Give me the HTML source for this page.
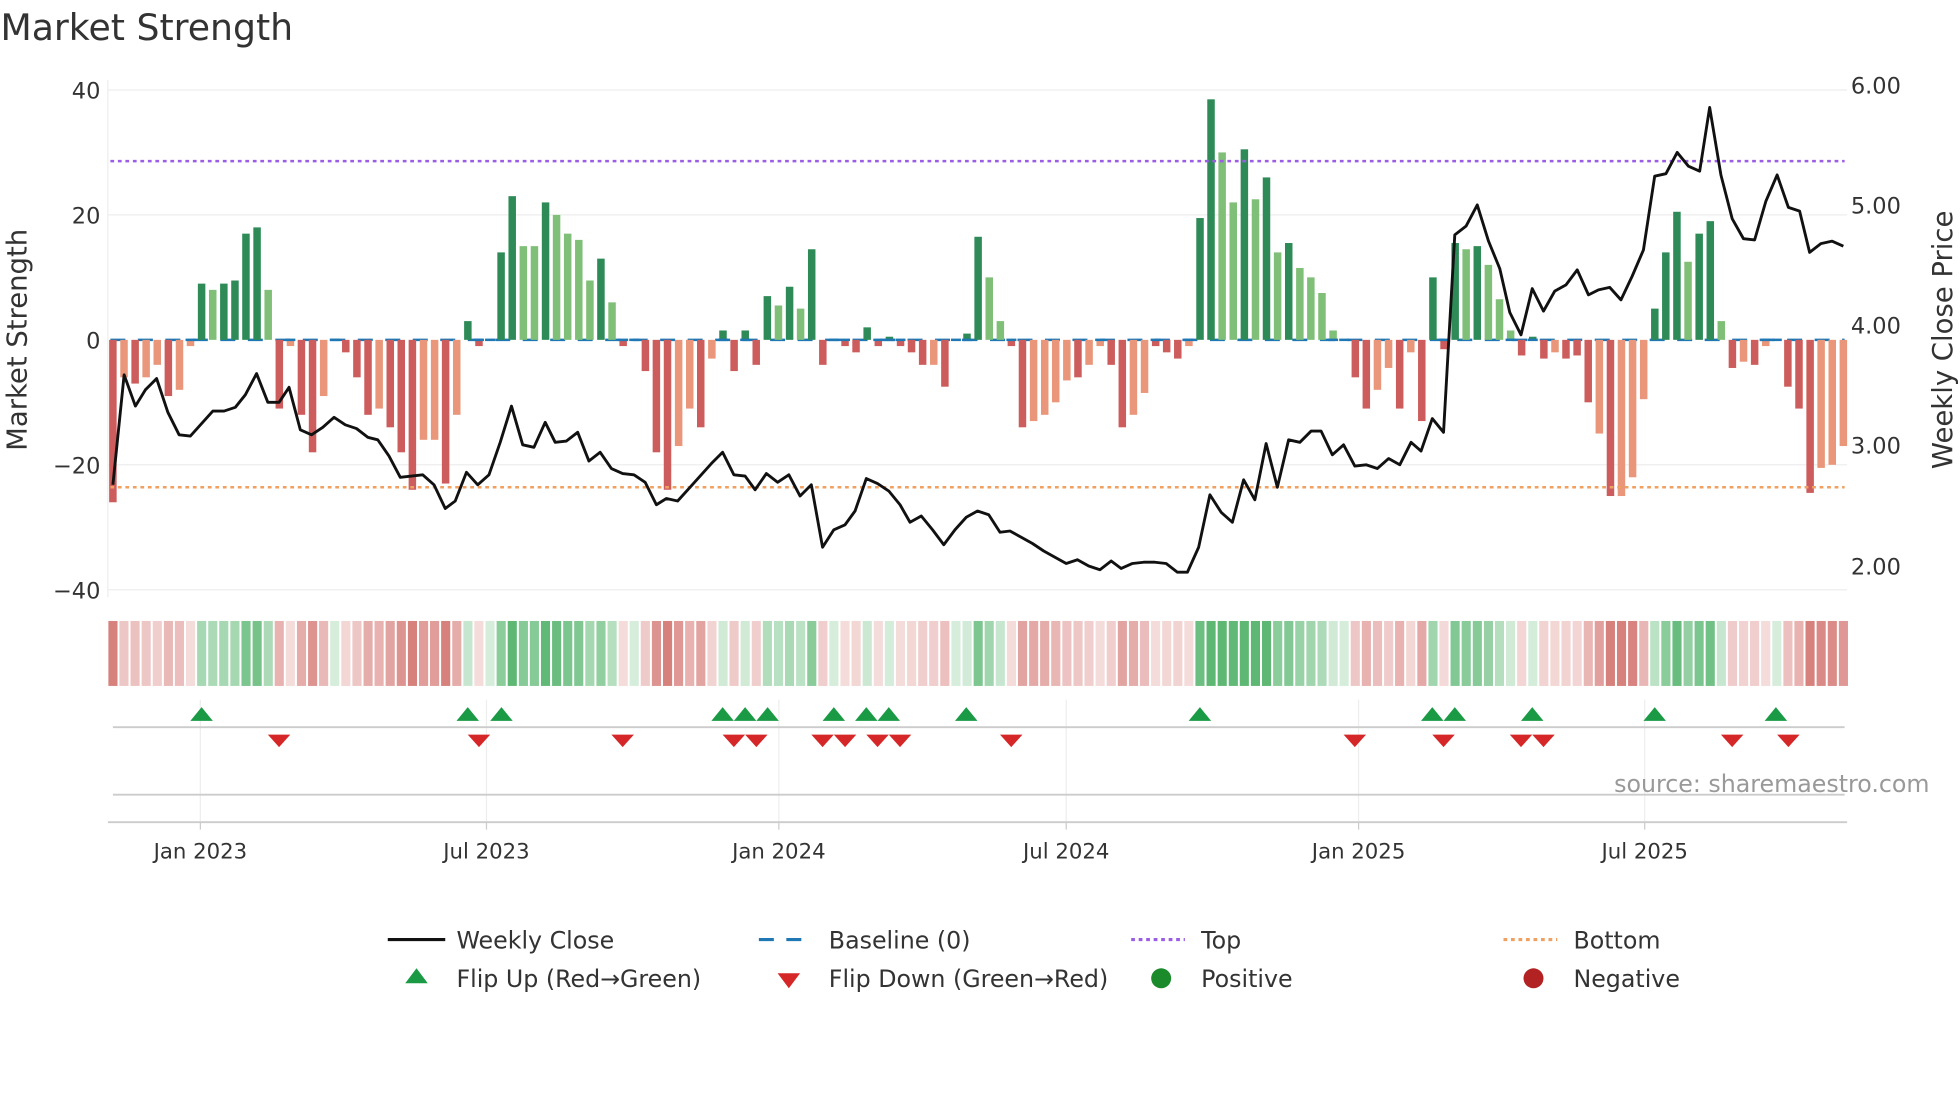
<!DOCTYPE html>
<html><head><meta charset="utf-8"><style>
html,body{margin:0;padding:0;background:#fff;}
svg{display:block;font-family:"DejaVu Sans","Liberation Sans",sans-serif;}
</style></head><body>
<svg id="s" width="1960" height="1102" viewBox="0 0 1568 882" xmlns="http://www.w3.org/2000/svg">
<rect width="1568" height="882" fill="#fff"/>
<text x="0" y="32" font-size="29" fill="#333">Market Strength</text>
<g stroke="#eeeeee" stroke-width="1">
<line x1="86" y1="72" x2="1478" y2="72"/><line x1="86" y1="172" x2="1478" y2="172"/>
<line x1="86" y1="372" x2="1478" y2="372"/><line x1="86" y1="472" x2="1478" y2="472"/>
<line x1="86" y1="64" x2="86" y2="478"/>
</g>
<g font-size="18" fill="#333" text-anchor="end">
<text x="80" y="79">40</text><text x="80" y="179">20</text><text x="80" y="279">0</text>
<text x="80" y="379">−20</text><text x="80" y="479">−40</text>
</g>
<g font-size="18" fill="#333">
<text x="1481" y="75">6.00</text><text x="1481" y="171">5.00</text><text x="1481" y="267">4.00</text>
<text x="1481" y="363">3.00</text><text x="1481" y="460">2.00</text>
</g>
<text transform="translate(21,272) rotate(-90)" font-size="22" fill="#333" text-anchor="middle">Market Strength</text>
<text transform="translate(1562,272) rotate(-90)" font-size="22" fill="#333" text-anchor="middle">Weekly Close Price</text>
<line x1="88" y1="272" x2="1476" y2="272" stroke="#1f77b4" stroke-width="2" stroke-dasharray="12,10"/>
<g id="bars"></g>
<line x1="88" y1="129" x2="1476" y2="129" stroke="#9b5de5" stroke-width="2" stroke-dasharray="3,3"/>
<line x1="88" y1="390" x2="1476" y2="390" stroke="#f0a060" stroke-width="2" stroke-dasharray="3,3"/>
<g id="base"></g>
<polyline id="price" fill="none" stroke="#111" stroke-width="2.3" stroke-linejoin="round"/>
<g id="heat"></g>
<g stroke="#eeeeee" stroke-width="1">
<line x1="160" y1="560" x2="160" y2="658"/><line x1="389" y1="560" x2="389" y2="658"/>
<line x1="623" y1="560" x2="623" y2="658"/><line x1="853" y1="560" x2="853" y2="658"/>
<line x1="1087" y1="560" x2="1087" y2="658"/><line x1="1316" y1="560" x2="1316" y2="658"/>
</g>
<line x1="90" y1="582" x2="1476" y2="582" stroke="#ccc" stroke-width="1.5"/>
<line x1="90" y1="636" x2="1476" y2="636" stroke="#ccc" stroke-width="1.5"/>
<line x1="86" y1="658" x2="1478" y2="658" stroke="#ccc" stroke-width="1.5"/>
<g stroke="#ccc"><line x1="160" y1="658" x2="160" y2="664"/><line x1="389" y1="658" x2="389" y2="664"/><line x1="623" y1="658" x2="623" y2="664"/><line x1="853" y1="658" x2="853" y2="664"/><line x1="1087" y1="658" x2="1087" y2="664"/><line x1="1316" y1="658" x2="1316" y2="664"/></g>
<g id="marks"></g>
<text x="1544" y="634" font-size="19" fill="#999" text-anchor="end">source: sharemaestro.com</text>
<g font-size="17" fill="#333" text-anchor="middle">
<text x="160" y="687">Jan 2023</text><text x="389" y="687">Jul 2023</text><text x="623" y="687">Jan 2024</text>
<text x="853" y="687">Jul 2024</text><text x="1087" y="687">Jan 2025</text><text x="1316" y="687">Jul 2025</text>
</g>
<g font-size="19" fill="#333">
<line x1="310" y1="752" x2="356" y2="752" stroke="#111" stroke-width="2.5"/><text x="365" y="759">Weekly Close</text>
<line x1="607" y1="752" x2="650" y2="752" stroke="#1f77b4" stroke-width="2.5" stroke-dasharray="12,10"/><text x="663" y="759">Baseline (0)</text>
<line x1="905" y1="752" x2="948" y2="752" stroke="#9b5de5" stroke-width="2.5" stroke-dasharray="3,3"/><text x="961" y="759">Top</text>
<line x1="1203" y1="752" x2="1246" y2="752" stroke="#f0a060" stroke-width="2.5" stroke-dasharray="3,3"/><text x="1259" y="759">Bottom</text>
<polygon points="324,787 333,775 342,787" fill="#1a9a44"/><text x="365" y="790">Flip Up (Red→Green)</text>
<polygon points="622,779 640,779 631,791" fill="#d62728"/><text x="663" y="790">Flip Down (Green→Red)</text>
<circle cx="929" cy="783" r="8" fill="#1a8a2a"/><text x="961" y="790">Positive</text>
<circle cx="1227" cy="783" r="8" fill="#b22222"/><text x="1259" y="790">Negative</text>
</g>
</svg>
<script>
var vals="-26 -6l -7 -6l -4l -9 -8l -1l 9 8l 9 9.5 17 18 8l -11 -1l -12 -18 -9l 0 -2 -6 -12 -11l -14 -18 -24 -16l -16l -23 -12l 3 -1 0 14 23 15l 15l 22 20l 17l 16l 9.5l 13 6l -1 0 -5 -18 -24 -17l -11l -14 -3l 1.5 -5 1.5 -4 7 5.5l 8.5 5l 14.5 -4 0 -1 -2 2 -1 0.5 -1 -2 -4 -4l -7.5 0 1 16.5 10l 3l -1 -14 -13l -12l -10l -6.5l -6 -4l -1l -4 -14 -12l -8.5l -1 -2 -3 -1l 19.5 38.5 30l 22l 30.5 22.5l 26 14l 15.5 11.5l 10l 7.5l 1.5l 0 -6 -11 -8l -4.5l -11 -2l -13 10 -1.5 15.5 14.5l 15 12l 6.5l 1.5l -2.5 0.5 -3 -2l -3 -2.5 -10 -15l -25 -25l -22l -9.5l 5 14 20.5 12.5l 17 19 3l -4.5 -3.5l -4 -1l 0 -7.5 -11 -24.5 -20.5l -20l -17l".split(" ");
var N=vals.length, x0=90, dx=(1475-90)/(N-1);
var b="",h="",base="";
for(var i=0;i<N;i++){var s=vals[i],l=s.slice(-1)=="l",v=parseFloat(s),x=x0+dx*i;
 var y0=272,y=272-v*5;
 var c=v>=0?(l?"#7fbf77":"#2e8b57"):(l?"#e9967a":"#cd5c5c");
 if(Math.abs(v)>0.2) b+='<rect x="'+(x-3).toFixed(1)+'" y="'+Math.min(y,y0).toFixed(1)+'" width="6" height="'+Math.abs(v*5).toFixed(1)+'" fill="'+c+'"/>';
 var a=Math.min(1,0.25+Math.abs(v)/30);
 var hc=v>=0?"rgba(40,160,70,"+(a*0.75).toFixed(2)+")":"rgba(200,80,75,"+(a*0.72).toFixed(2)+")";
 h+='<rect x="'+(x-dx/2+0.8).toFixed(1)+'" y="497" width="'+(dx-1.6).toFixed(1)+'" height="52" fill="'+hc+'"/>';
 if(Math.abs(v)<=1.5) base+='<line x1="'+(x-4)+'" y1="272" x2="'+(x+4)+'" y2="272" stroke="#1f77b4" stroke-width="2"/>';
}
document.getElementById("bars").innerHTML=b;
document.getElementById("heat").innerHTML=h;
document.getElementById("base").innerHTML=base;
var p="90,388 99,300 108,325 116,312 125,303 134,330 143,348 152,349 161,339 170,329 179,329 188,326 196,316 205,299 214,322 223,322 231,310 240,344 249,348 258,342 267,334 276,340 285,343 294,350 302,352 311,365 320,382 329,381 338,380 347,388 356,407 364,401 373,378 382,388 391,380 400,354 409,325 418,356 427,358 436,338 444,354 453,353 462,346 471,369 480,362 489,375 498,379 507,380 516,386 525,404 533,399 542,401 551,391 560,381 569,371 578,362 587,380 596,381 604,392 613,379 622,386 631,380 640,397 649,388 658,438 667,424 676,420 684,409 693,383 702,387 711,393 720,404 728,418 737,413 746,424 755,436 764,424 773,414 782,409 791,412 800,426 808,425 817,430 826,435 835,441 844,446 853,451 862,448 871,453 880,456 889,449 897,455 906,451 915,450 924,450 933,451 942,458 950,458 959,438 968,396 977,410 986,418 995,384 1004,400 1013,355 1022,390 1031,352 1040,354 1049,345 1057,345 1066,364 1075,356 1084,373 1093,372 1102,375 1111,367 1120,372 1129,354 1137,361 1146,335 1155,346 1164,188 1173,181 1182,164 1191,193 1200,215 1208,250 1217,268 1226,231 1235,249 1244,233 1253,228 1262,216 1271,236 1279,232 1288,230 1297,240 1306,221 1315,200 1324,141 1333,139 1342,122 1351,133 1360,137 1368,86 1377,140 1386,175 1395,191 1404,192 1413,161 1422,140 1431,166 1440,169 1448,202 1457,195 1466,193 1475,197";
document.getElementById("price").setAttribute("points",p);
var up=[161,374,401,578,596,614,667,693,711,773,960,1146,1164,1226,1324,1421];
var dn=[223,383,498,587,605,658,676,702,720,809,1084,1155,1217,1235,1386,1431];
var m="";
up.forEach(function(x){m+='<polygon points="'+(x-9)+',577 '+x+',566 '+(x+9)+',577" fill="#1a9a44"/>';});
dn.forEach(function(x){m+='<polygon points="'+(x-9)+',588 '+(x+9)+',588 '+x+',598" fill="#d62728"/>';});
document.getElementById("marks").innerHTML=m;
</script>
</body></html>
